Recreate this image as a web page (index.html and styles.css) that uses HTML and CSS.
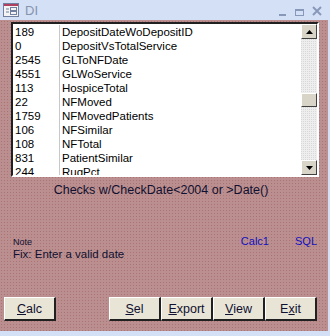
FILE: index.html
```html
<!DOCTYPE html>
<html lang="en">
<head>
    <meta charset="UTF-8">
    <title>DI</title>
    <link rel="stylesheet" href="styles.css">
</head>
<body>
    <div class="window">
        <div class="titlebar">
            <svg class="app-icon" width="16" height="14" viewBox="0 0 16 14">
                <rect x="0.5" y="0.5" width="15" height="13" fill="#f4f4f4" stroke="#7080a0"/>
                <rect x="1" y="1" width="14" height="2" fill="#b04060"/>
                <line x1="3" y1="6" x2="6" y2="6" stroke="#7080a0"/>
                <line x1="3" y1="9" x2="6" y2="9" stroke="#7080a0"/>
                <rect x="7.5" y="4.5" width="6" height="3" fill="none" stroke="#7080a0"/>
                <rect x="7.5" y="8.5" width="6" height="3" fill="none" stroke="#7080a0"/>
            </svg>
            <span class="title">DI</span>
            <div class="controls">
                <svg width="8" height="14" viewBox="0 0 8 14"><rect x="0" y="11" width="7" height="2" fill="#8898b8"/></svg>
                <svg width="9" height="14" viewBox="0 0 9 14"><rect x="0.5" y="6.5" width="8" height="6" fill="none" stroke="#8898b8"/><rect x="0" y="6" width="9" height="2" fill="#8898b8"/></svg>
                <svg width="10" height="14" viewBox="0 0 10 14"><path d="M1 4 L9 12 M9 4 L1 12" stroke="#8898b8" stroke-width="2"/></svg>
            </div>
        </div>

        <div class="body">
            <div class="listbox">
                <div class="rows">
                    <div class="row"><span class="num">189</span><span class="name">DepositDateWoDepositID</span></div>
                    <div class="row"><span class="num">0</span><span class="name">DepositVsTotalService</span></div>
                    <div class="row"><span class="num">2545</span><span class="name">GLToNFDate</span></div>
                    <div class="row"><span class="num">4551</span><span class="name">GLWoService</span></div>
                    <div class="row"><span class="num">113</span><span class="name">HospiceTotal</span></div>
                    <div class="row"><span class="num">22</span><span class="name">NFMoved</span></div>
                    <div class="row"><span class="num">1759</span><span class="name">NFMovedPatients</span></div>
                    <div class="row"><span class="num">106</span><span class="name">NFSimilar</span></div>
                    <div class="row"><span class="num">108</span><span class="name">NFTotal</span></div>
                    <div class="row"><span class="num">831</span><span class="name">PatientSimilar</span></div>
                    <div class="row"><span class="num">244</span><span class="name">RugPct</span></div>
                </div>
                <div class="scrollbar">
                    <div class="sb-btn"><svg width="7" height="4" viewBox="0 0 7 4"><path d="M3.5 0 L7 4 L0 4 Z" fill="#000"/></svg></div>
                    <div class="sb-track">
                        <div class="sb-thumb"></div>
                    </div>
                    <div class="sb-btn"><svg width="7" height="4" viewBox="0 0 7 4"><path d="M0 0 L7 0 L3.5 4 Z" fill="#000"/></svg></div>
                </div>
            </div>

            <div class="caption">Checks w/CheckDate&lt;2004 or &gt;Date()</div>

            <div class="info">
                <div class="note">
                    <div class="note-label">Note</div>
                    <div class="note-text">Fix: Enter a valid date</div>
                </div>
                <div class="links">
                    <span>Calc1</span>
                    <span>SQL</span>
                </div>
            </div>

            <div class="buttons">
                <button class="btn"><u>C</u>alc</button>
                <div class="btn-group">
                    <button class="btn"><u>S</u>el</button>
                    <button class="btn"><u>E</u>xport</button>
                    <button class="btn"><u>V</u>iew</button>
                    <button class="btn">E<u>x</u>it</button>
                </div>
            </div>
        </div>
        <div class="bottom"></div>
    </div>
</body>
</html>
```

FILE: styles.css
```css
body {
    margin: 0;
    font-family: "Liberation Sans", Arial, sans-serif;
}
.window {
    width: 330px;
    height: 336px;
    display: flex;
    flex-direction: column;
    background-color: #d4e0f6;
}
.titlebar {
    height: 20px;
    display: flex;
    align-items: center;
    padding-left: 3px;
    background-color: #d4e0f6;
}
.app-icon {
    margin-right: 6px;
}
.title {
    color: #8494ac;
    font-size: 13px;
}
.controls {
    margin-left: auto;
    margin-right: 8px;
    display: flex;
    gap: 8px;
    align-items: center;
}
.body {
    flex: 1;
    margin-right: 2px;
    background-color: #bb8f8f;
    background-image: radial-gradient(#a87474 0.8px, transparent 0.9px);
    background-size: 3px 3px;
    padding: 2px 0 0 11px;
    display: flex;
    flex-direction: column;
}
.bottom {
    height: 5px;
}
.listbox {
    width: 304px;
    height: 151px;
    border-top: 2px solid #202020;
    border-left: 2px solid #202020;
    border-right: 2px solid #fff;
    border-bottom: 2px solid #fff;
    background: #fff;
    display: flex;
}
.rows {
    flex: 1;
    overflow: hidden;
    padding-top: 1px;
    font-size: 11.5px;
    color: #000;
}
.row {
    height: 14px;
    line-height: 14px;
    display: flex;
    white-space: nowrap;
}
.num {
    width: 44px;
    padding-left: 2px;
    border-right: 1px solid #c8c8c8;
}
.name {
    padding-left: 2px;
}
.scrollbar {
    width: 16px;
    display: flex;
    flex-direction: column;
    background-color: #eeeeee;
    background-image: linear-gradient(45deg, #d8d8d8 25%, transparent 25%, transparent 75%, #d8d8d8 75%);
    background-size: 2px 2px;
}
.sb-btn,
.sb-thumb {
    height: 15px;
    box-sizing: border-box;
    background: #d8d4c8;
    border-top: 1px solid #fff;
    border-left: 1px solid #fff;
    border-right: 1px solid #404040;
    border-bottom: 1px solid #404040;
    display: flex;
    align-items: center;
    justify-content: center;
}
.sb-track {
    flex: 1;
    padding-top: 54px;
}
.sb-thumb {
    height: 14px;
}
.caption {
    margin-top: 6px;
    width: 300px;
    text-align: center;
    font-size: 12.5px;
    color: #101030;
}
.info {
    margin-top: 38px;
    display: flex;
    width: 304px;
    margin-left: 2px;
}
.note-label {
    font-size: 9px;
    color: #101030;
    margin-top: 2px;
}
.note-text {
    font-size: 11.5px;
    color: #101030;
    margin-top: 1px;
}
.links {
    margin-left: auto;
    display: flex;
    gap: 26px;
    font-size: 11px;
    color: #1010c0;
}
.buttons {
    margin-top: 37px;
    margin-left: -7px;
    display: flex;
    gap: 53px;
}
.btn-group {
    display: flex;
}
.btn {
    width: 52px;
    height: 24px;
    padding: 0;
    font-family: "Liberation Sans", Arial, sans-serif;
    font-size: 12.5px;
    color: #101030;
    background: #e8e4d6;
    border-top: 1px solid #fff;
    border-left: 1px solid #fff;
    border-right: 2px solid #202020;
    border-bottom: 2px solid #202020;
}
```
